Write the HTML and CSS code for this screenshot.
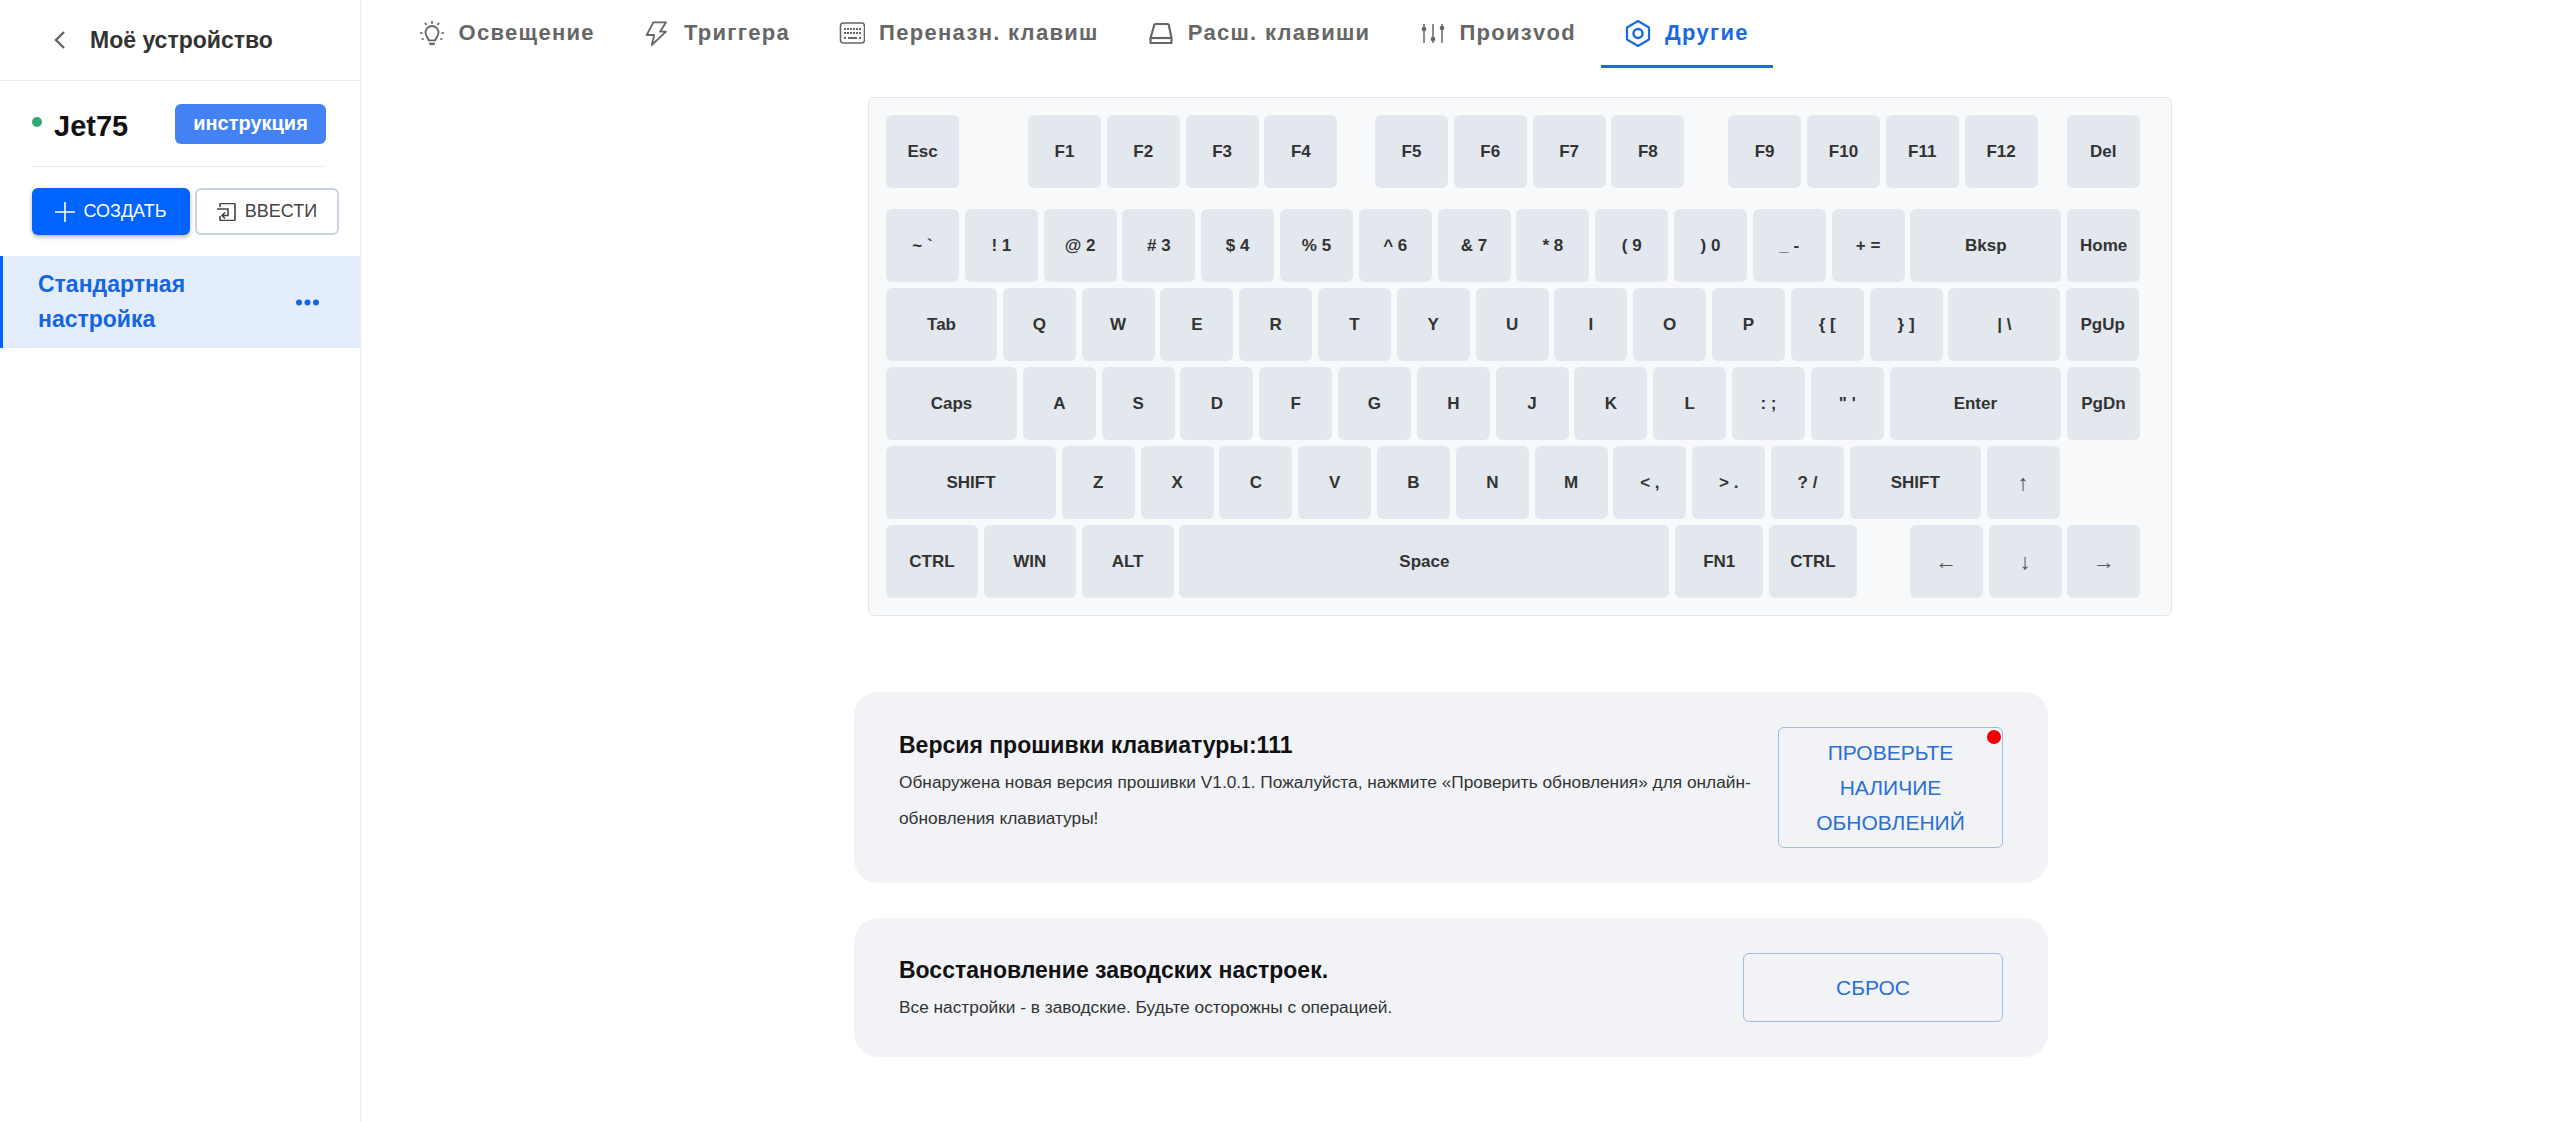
FILE: index.html
```html
<!DOCTYPE html>
<html lang="ru">
<head>
    <meta charset="UTF-8">
    <title>Jet75</title>
    <link rel="stylesheet" href="styles.css">
</head>
<body>
    <aside class="sidebar">
        <div class="side-head">
            <svg class="back-icon" width="14" height="20" viewBox="0 0 14 20"><path d="M12 2 4 10l8 8" fill="none" stroke="#666" stroke-width="2.400"/></svg>
            <span>Моё устройство</span>
        </div>
        <div class="device">
            <i class="dot"></i>
            <span class="device-name">Jet75</span>
            <span class="badge">инструкция</span>
        </div>
        <div class="side-actions">
            <button class="btn-create">
                <svg width="20" height="20" viewBox="0 0 20 20"><path d="M10 0v20M0 10h20" stroke="#fff" stroke-width="1.600"/></svg>
                СОЗДАТЬ
            </button>
            <button class="btn-import">
                <svg width="19" height="18" viewBox="0 0 19 18" fill="none" stroke="#444" stroke-width="1.600"><path d="M3 4V1.500a1 1 0 0 1 1-1h13a1 1 0 0 1 1 1v15a1 1 0 0 1-1 1H4a1 1 0 0 1-1-1V13"/><path d="M0 6h11v6.500H5M8 9.500l-3 3 3 3"/></svg>
                ВВЕСТИ
            </button>
        </div>
        <div class="profile-row">
            <span>Стандартная настройка</span>
            <svg width="23" height="7" viewBox="0 0 23 7" fill="#1565e0"><circle cx="3" cy="3.500" r="3"/><circle cx="11.500" cy="3.500" r="3"/><circle cx="20" cy="3.500" r="3"/></svg>
        </div>
    </aside>

    <main class="main">
        <nav class="tabs">
            <a class="tab">
                <svg width="26" height="28" viewBox="0 0 28 28" fill="none" stroke="currentColor" stroke-width="2"><path d="M10.500 22c0-3-3.500-4-3.500-8.500a7 7 0 0 1 14 0c0 4.500-3.500 5.500-3.500 8.500z"/><path d="M14 1v3M6.500 3l1.500 2.500M21.500 3 20 5.500M1 14h3M24 14h3M3 21l2-1M25 21l-2-1" stroke-width="1.800"/><path d="M10.500 24.500h7l-1 2.500h-5z" fill="currentColor" stroke="none"/></svg>
                Освещение
            </a>
            <a class="tab">
                <svg width="26" height="28" viewBox="0 0 26 28" fill="none" stroke="currentColor" stroke-width="1.800" stroke-linejoin="round"><path d="M9.300 3.300H22l-6 9.400h6L7.700 26l2.600-10H2.700z"/></svg>
                Триггера
            </a>
            <a class="tab">
                <svg width="26" height="28" viewBox="0 0 26 28" fill="none" stroke="currentColor" stroke-width="1.600"><rect x="1.500" y="4" width="24" height="20" rx="3"/><path d="M5 10h17M5 14h17" stroke-width="2" stroke-dasharray="2 1"/><path d="M5 19h2M9 19h9M20 19h2" stroke-width="2"/></svg>
                Переназн. клавиш
            </a>
            <a class="tab">
                <svg width="26" height="28" viewBox="0 0 26 28" fill="none" stroke="currentColor" stroke-width="2.200" stroke-linejoin="round"><path d="M8 5h11a2 2 0 0 1 2 2l2.500 12v5H2.500v-5L6 7a2 2 0 0 1 2-2z"/><path d="M3 19h20"/></svg>
                Расш. клавиши
            </a>
            <a class="tab">
                <svg width="26" height="28" viewBox="0 0 26 28" fill="currentColor" stroke="currentColor" stroke-width="1.500"><path d="M5 5v19M14 5v19M23 5v19"/><circle cx="5" cy="10" r="1.600"/><circle cx="14" cy="20" r="1.600"/><circle cx="23" cy="9" r="1.600"/></svg>
                Произvod
            </a>
            <a class="tab active">
                <svg width="26" height="28" viewBox="0 0 26 28" fill="none" stroke="currentColor" stroke-width="2.200" stroke-linejoin="round"><path d="M13 2 24 8.500v12L13 27 2 20.500v-12z"/><circle cx="13" cy="14.500" r="4.500" stroke-width="2.500"/></svg>
                Другие
            </a>
        </nav>

        <div class="keyboard">
            <div class="kb-row fn-row">
                <div class="key">Esc</div>
                <div class="key gap-esc">F1</div><div class="key">F2</div><div class="key">F3</div><div class="key">F4</div>
                <div class="key gap-fn">F5</div><div class="key">F6</div><div class="key">F7</div><div class="key">F8</div>
                <div class="key gap-f9">F9</div><div class="key">F10</div><div class="key">F11</div><div class="key">F12</div>
                <div class="key gap-del">Del</div>
            </div>
            <div class="kb-row">
                <div class="key">~ `</div><div class="key">! 1</div><div class="key">@ 2</div><div class="key"># 3</div><div class="key">$ 4</div><div class="key">% 5</div><div class="key">^ 6</div><div class="key">&amp; 7</div><div class="key">* 8</div><div class="key">( 9</div><div class="key">) 0</div><div class="key">_ -</div><div class="key">+ =</div>
                <div class="key w-bksp">Bksp</div>
                <div class="key">Home</div>
            </div>
            <div class="kb-row">
                <div class="key w-tab">Tab</div>
                <div class="key">Q</div><div class="key">W</div><div class="key">E</div><div class="key">R</div><div class="key">T</div><div class="key">Y</div><div class="key">U</div><div class="key">I</div><div class="key">O</div><div class="key">P</div><div class="key">{ [</div><div class="key">} ]</div>
                <div class="key w-pipe">| \</div>
                <div class="key">PgUp</div>
            </div>
            <div class="kb-row">
                <div class="key w-caps">Caps</div>
                <div class="key">A</div><div class="key">S</div><div class="key">D</div><div class="key">F</div><div class="key">G</div><div class="key">H</div><div class="key">J</div><div class="key">K</div><div class="key">L</div><div class="key">: ;</div><div class="key">" '</div>
                <div class="key w-enter">Enter</div>
                <div class="key">PgDn</div>
            </div>
            <div class="kb-row">
                <div class="key w-shift">SHIFT</div>
                <div class="key">Z</div><div class="key">X</div><div class="key">C</div><div class="key">V</div><div class="key">B</div><div class="key">N</div><div class="key">M</div><div class="key">&lt; ,</div><div class="key">&gt; .</div><div class="key">? /</div>
                <div class="key w-caps">SHIFT</div>
                <div class="key arrow">↑</div>
            </div>
            <div class="kb-row">
                <div class="key w-mod">CTRL</div><div class="key w-mod">WIN</div><div class="key w-mod">ALT</div>
                <div class="key w-space">Space</div>
                <div class="key w-fn">FN1</div><div class="key w-fn">CTRL</div>
                <div class="key arrow gap-arrows">←</div><div class="key arrow">↓</div><div class="key arrow">→</div>
            </div>
        </div>

        <section class="card card-firmware">
            <div class="card-text">
                <h3>Версия прошивки клавиатуры:111</h3>
                <p>Обнаружена новая версия прошивки V1.0.1. Пожалуйста, нажмите «Проверить обновления» для онлайн-обновления клавиатуры!</p>
            </div>
            <button class="btn-outline btn-update">ПРОВЕРЬТЕ НАЛИЧИЕ ОБНОВЛЕНИЙ<i class="red-dot"></i></button>
        </section>

        <section class="card card-reset">
            <div class="card-text">
                <h3>Восстановление заводских настроек.</h3>
                <p>Все настройки - в заводские. Будьте осторожны с операцией.</p>
            </div>
            <button class="btn-outline btn-reset">СБРОС</button>
        </section>
    </main>
</body>
</html>
```

FILE: styles.css
```css
* {
    box-sizing: border-box;
}
body {
    margin: 0;
    height: 100vh;
    display: flex;
    overflow: hidden;
    font-family: "Liberation Sans", Arial, sans-serif;
    background: white;
    color: #111;
}
button {
    font-family: inherit;
    cursor: pointer;
}

/* sidebar */
.sidebar {
    width: 361px;
    flex-shrink: 0;
    border-right: 1px solid #e8eaed;
}
.side-head {
    height: 81px;
    padding-left: 52px;
    display: flex;
    align-items: center;
    gap: 24px;
    border-bottom: 1px solid #e8eaed;
    font-size: 23px;
    font-weight: 700;
    color: #333;
}
.device {
    margin: 23px 34px 0 32px;
    height: 63px;
    display: flex;
    align-items: flex-start;
    border-bottom: 1px solid #e8eaed;
}
.dot {
    width: 10px;
    height: 10px;
    margin-top: 13px;
    border-radius: 50%;
    background: #34a873;
}
.device-name {
    margin-left: 12px;
    padding-top: 2px;
    font-size: 29px;
    line-height: 40px;
    font-weight: 700;
}
.badge {
    margin-left: auto;
    width: 151px;
    height: 40px;
    border-radius: 6px;
    background: #4282f5;
    color: white;
    font-size: 20px;
    font-weight: 700;
    line-height: 38px;
    text-align: center;
}
.side-actions {
    margin: 21px 21px 0 32px;
    display: flex;
    gap: 5px;
}
.side-actions button {
    height: 47px;
    display: flex;
    align-items: center;
    justify-content: center;
    font-size: 18px;
    border-radius: 6px;
}
.btn-create {
    width: 158px;
    gap: 8px;
    border: none;
    background: #0062ff;
    color: white;
    box-shadow: 0 2px 4px rgba(0,0,0,0.3);
}
.btn-import {
    width: 144px;
    gap: 9px;
    border: 2px solid #c8d4e2;
    background: white;
    color: #444;
}
.profile-row {
    margin-top: 21px;
    height: 92px;
    padding: 0 41px 0 35px;
    display: flex;
    align-items: center;
    justify-content: space-between;
    border-left: 3px solid #0062ff;
    background: #e3edfc;
    color: #1565e0;
    font-size: 23px;
    font-weight: 700;
    line-height: 35px;
}
.profile-row span {
    width: 200px;
}

/* main */
.main {
    flex: 1;
    min-width: 0;
}
.tabs {
    height: 68px;
    padding-left: 33px;
    display: flex;
}
.tab {
    padding: 1px 24.5px 0;
    display: flex;
    align-items: center;
    gap: 14px;
    border-bottom: 3px solid transparent;
    font-size: 22px;
    font-weight: 700;
    letter-spacing: 1.3px;
    color: #666;
    white-space: nowrap;
}
.tab.active {
    color: #1a6be0;
    border-bottom-color: #1a6be0;
}

/* keyboard */
.keyboard {
    width: 1304px;
    height: 519px;
    margin: 29px 0 0 507px;
    padding: 17px 0 0 17px;
    border: 1px solid #e2e6ea;
    border-radius: 6px;
    background: #f7f9fb;
}
.kb-row {
    display: flex;
    gap: 5.8px;
    margin-bottom: 6px;
}
.fn-row {
    margin-bottom: 21px;
}
.key {
    width: 73px;
    height: 73px;
    flex-shrink: 0;
    display: flex;
    align-items: center;
    justify-content: center;
    border-radius: 6px;
    background: #e3e7ee;
    color: #333;
    font-size: 17px;
    font-weight: 700;
}
.key.arrow {
    font-weight: 400;
    font-size: 22px;
    color: #555;
}
.gap-esc { margin-left: 63.2px; }
.gap-fn { margin-left: 31.8px; }
.gap-f9 { margin-left: 38px; }
.gap-del { margin-left: 23.3px; }
.gap-arrows { margin-left: 47px; }
.w-bksp { width: 151px; }
.w-tab { width: 111px; }
.w-pipe { width: 112px; }
.w-caps { width: 131px; }
.w-enter { width: 171.6px; }
.w-shift { width: 170px; }
.w-mod { width: 92px; }
.w-space { width: 490px; }
.w-fn { width: 88px; }

/* cards */
.card {
    width: 1194px;
    margin-left: 493px;
    padding: 0 45px;
    display: flex;
    align-items: center;
    justify-content: space-between;
    border-radius: 24px;
    background: #f1f3f7;
}
.card-firmware {
    height: 191px;
    margin-top: 76px;
}
.card-firmware .card-text {
    width: 860px;
    margin-bottom: 14px;
}
.card-reset {
    height: 139px;
    margin-top: 35px;
}
.card h3 {
    margin: 0;
    font-size: 23px;
    line-height: 38px;
    font-weight: 700;
}
.card p {
    margin: 0;
    font-size: 17.3px;
    line-height: 36px;
    color: #333;
}
.btn-outline {
    position: relative;
    padding: 0 20px;
    border: 1.5px solid #9dbbe6;
    border-radius: 6px;
    background: transparent;
    color: #2a6fd6;
    font-size: 21px;
    line-height: 35px;
    flex-shrink: 0;
}
.btn-update {
    width: 225px;
    height: 121px;
}
.btn-reset {
    width: 260px;
    height: 69px;
}
.red-dot {
    position: absolute;
    top: 2px;
    right: 1px;
    width: 14px;
    height: 14px;
    border-radius: 50%;
    background: #f00000;
}
```
